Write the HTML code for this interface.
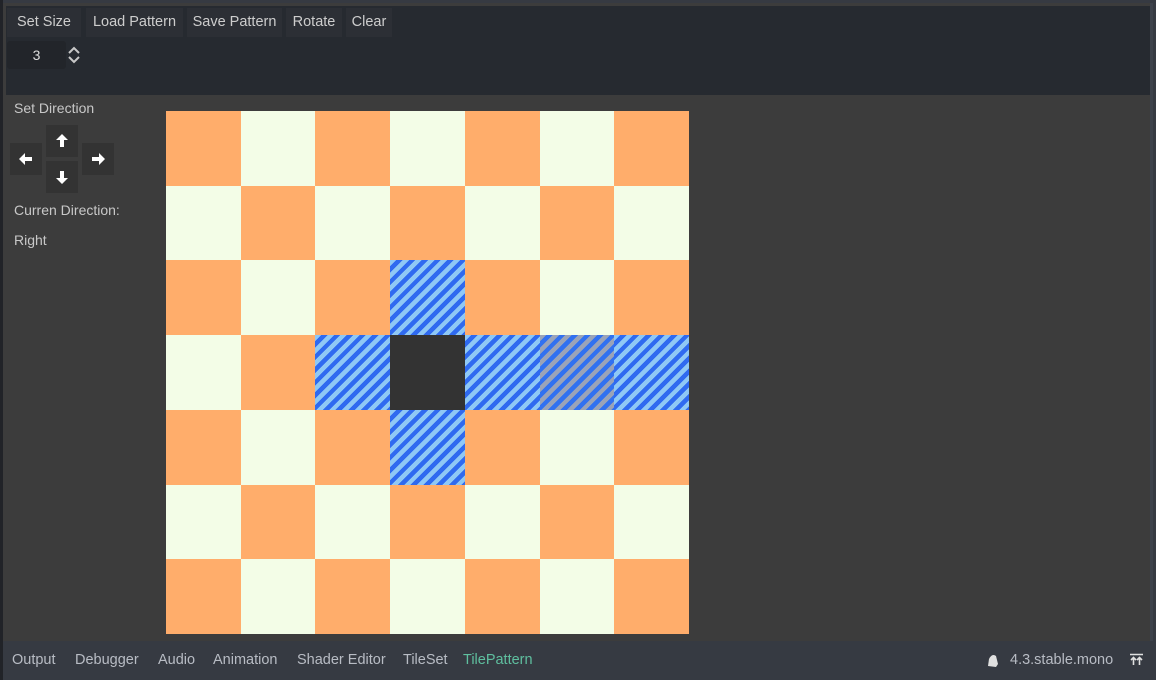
<!DOCTYPE html>
<html><head><style>
*{margin:0;padding:0;box-sizing:border-box}
body{width:1156px;height:680px;background:#363a42;position:relative;overflow:hidden;font-family:"Liberation Sans","DejaVu Sans",sans-serif;font-size:14px;color:#c8c8c8}
.abs{position:absolute}
.main{left:3px;top:3px;width:1147px;height:638px;background:#3c3c3c}
.top{left:6px;top:6px;width:1144px;height:89px;background:#262a30}
.btn{top:8px;height:29px;background:#2c2f35;color:#cdcdcd;line-height:28px;text-align:center;font-size:14.5px}
.spin{left:7px;top:41px;width:59px;height:28px;background:#22252a;border-radius:3px;text-align:center;line-height:28px;color:#ddd}
.ab{width:32px;height:32px;background:#333333}
.grid{left:166px;top:111px;width:523px;height:523px;display:grid;grid-template-columns:repeat(7,1fr);grid-template-rows:repeat(7,1fr)}
.o{background:#ffad6b}.c{background:#f3fde7}
.b{background:repeating-linear-gradient(135deg,#8fc8f5 0 4.5px,#2f6af0 4.5px 9px)}
.g{background:repeating-linear-gradient(135deg,#9aa3b8 0 4.5px,#3171f0 4.5px 9px)}
.d{background:#333333}
.bt{top:652px;color:#b8bcc4;font-size:14.5px}
</style></head><body>
<div class="abs" style="left:0;top:0;width:3px;height:680px;background:#212328"></div>
<div class="abs main"></div>
<div class="abs" style="left:1150px;top:3px;width:3px;height:638px;background:#3d424b"></div>
<div class="abs top"></div>
<div class="abs btn" style="left:7px;width:74px">Set Size</div>
<div class="abs btn" style="left:86px;width:97px">Load Pattern</div>
<div class="abs btn" style="left:187px;width:95px">Save Pattern</div>
<div class="abs btn" style="left:286px;width:56px">Rotate</div>
<div class="abs btn" style="left:346px;width:46px">Clear</div>
<div class="abs spin">3</div>
<svg class="abs" style="left:67px;top:46px" width="14" height="18"><path d="M2 7 L7 2 L12 7 M2 11 L7 16 L12 11" stroke="#c8c8c8" stroke-width="2" fill="none"/></svg>
<div class="abs" style="left:14px;top:100px">Set Direction</div>
<div class="abs ab" style="left:46px;top:125px"><svg width="32" height="32"><path d="M16 9 L22 15 H18 V22 H14 V15 H10 Z" fill="#fff"/></svg></div>
<div class="abs ab" style="left:10px;top:143px"><svg width="32" height="32"><path d="M9 16 L15 10 V14 H22 V18 H15 V22 Z" fill="#fff"/></svg></div>
<div class="abs ab" style="left:82px;top:143px"><svg width="32" height="32"><path d="M23 16 L17 10 V14 H10 V18 H17 V22 Z" fill="#fff"/></svg></div>
<div class="abs ab" style="left:46px;top:161px"><svg width="32" height="32"><path d="M16 23 L22 17 H18 V10 H14 V17 H10 Z" fill="#fff"/></svg></div>
<div class="abs" style="left:14px;top:202px">Curren Direction:</div>
<div class="abs" style="left:14px;top:232px">Right</div>
<div class="abs grid">
<div class="o"></div><div class="c"></div><div class="o"></div><div class="c"></div><div class="o"></div><div class="c"></div><div class="o"></div>
<div class="c"></div><div class="o"></div><div class="c"></div><div class="o"></div><div class="c"></div><div class="o"></div><div class="c"></div>
<div class="o"></div><div class="c"></div><div class="o"></div><div class="b"></div><div class="o"></div><div class="c"></div><div class="o"></div>
<div class="c"></div><div class="o"></div><div class="b"></div><div class="d"></div><div class="b"></div><div class="g"></div><div class="b"></div>
<div class="o"></div><div class="c"></div><div class="o"></div><div class="b"></div><div class="o"></div><div class="c"></div><div class="o"></div>
<div class="c"></div><div class="o"></div><div class="c"></div><div class="o"></div><div class="c"></div><div class="o"></div><div class="c"></div>
<div class="o"></div><div class="c"></div><div class="o"></div><div class="c"></div><div class="o"></div><div class="c"></div><div class="o"></div>
</div>
<div class="abs bt" style="left:12px">Output</div>
<div class="abs bt" style="left:75px">Debugger</div>
<div class="abs bt" style="left:158px">Audio</div>
<div class="abs bt" style="left:213px">Animation</div>
<div class="abs bt" style="left:297px">Shader Editor</div>
<div class="abs bt" style="left:403px">TileSet</div>
<div class="abs bt" style="left:463px;color:#5fbf9f">TilePattern</div>
<svg class="abs" style="left:985px;top:653px" width="16" height="16"><path d="M3 13 L4 6 Q7 0 11 3 L13 11 L11 14 Z" fill="#e0e0e0"/></svg>
<div class="abs bt" style="left:1010px">4.3.stable.mono</div>
<svg class="abs" style="left:1129px;top:653px" width="16" height="14"><path d="M1 1.5 H14 M4.5 12 V5 M2 7 L4.5 4.5 L7 7 M10.5 12 V5 M8 7 L10.5 4.5 L13 7" stroke="#e0e0e0" stroke-width="1.6" fill="none"/></svg>
</body></html>
